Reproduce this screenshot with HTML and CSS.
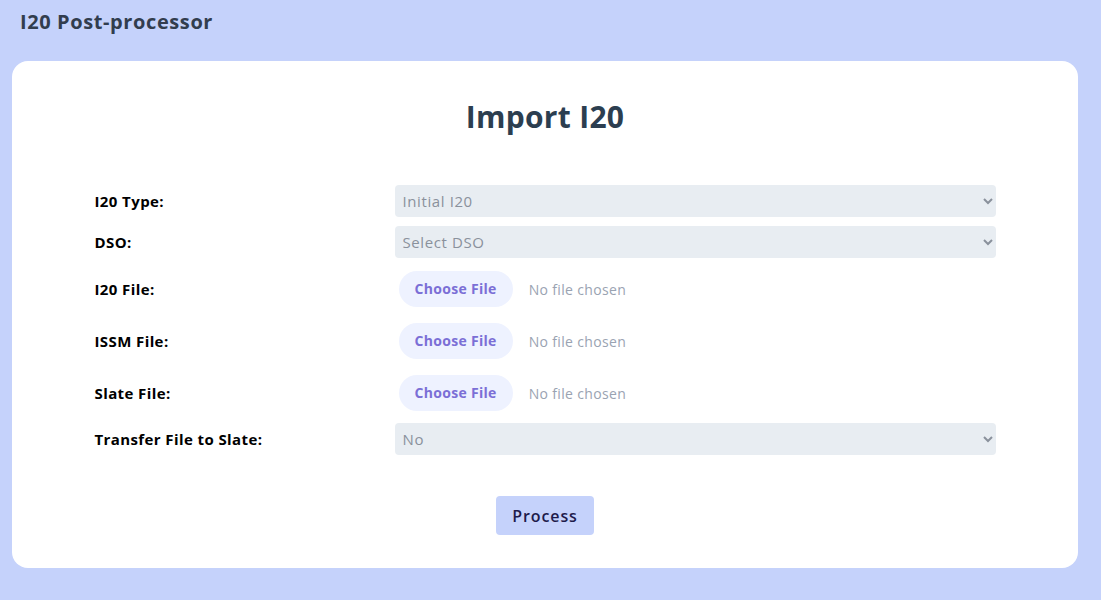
FILE: index.html
```html
<!DOCTYPE html>
<html lang="en">
<head>
<meta charset="utf-8">
<title>I20 Post-processor</title>
<link rel="stylesheet" href="styles.css">
</head>
<body>
<header class="topbar">I20 Post-processor</header>
<main class="page">
  <section class="card">
    <h1 class="title">Import I20</h1>
    <form class="form">
      <label class="label" for="type">I20 Type:</label>
      <select class="select" id="type"><option>Initial I20</option></select>

      <label class="label" for="dso">DSO:</label>
      <select class="select" id="dso"><option>Select DSO</option></select>

      <label class="label" for="i20file">I20 File:</label>
      <div class="file-cell"><input class="file" type="file" id="i20file"></div>

      <label class="label" for="issm">ISSM File:</label>
      <div class="file-cell"><input class="file" type="file" id="issm"></div>

      <label class="label" for="slate">Slate File:</label>
      <div class="file-cell"><input class="file" type="file" id="slate"></div>

      <label class="label" for="transfer">Transfer File to Slate:</label>
      <select class="select" id="transfer"><option>No</option></select>
    </form>
    <div class="actions">
      <button class="process" type="button">Process</button>
    </div>
  </section>
</main>
</body>
</html>
```

FILE: styles.css
```css
* { box-sizing: border-box; }

html, body {
  margin: 0;
  background: #c5d2fb;
  font-family: "Open Sans", "Liberation Sans", sans-serif;
}

.topbar {
  height: 44px;
  padding: 8px 20px;
  font-size: 20px;
  line-height: 28px;
  font-weight: 700;
  letter-spacing: 0.6px;
  color: #323d4e;
}

.page {
  padding: 17px 23px 32px 12px;
}

.card {
  background: #ffffff;
  border-radius: 16px;
  height: 507px;
  padding: 32px 0 0;
}

.title {
  margin: 0;
  height: 48px;
  font-size: 30px;
  line-height: 48px;
  font-weight: 700;
  letter-spacing: 0.3px;
  text-align: center;
  color: #2c3e50;
}

.form {
  width: 901px;
  margin: 44px auto 0;
  display: grid;
  grid-template-columns: 300px 601px;
  row-gap: 9px;
  align-items: center;
}

.label {
  font-size: 15px;
  font-weight: 700;
  letter-spacing: 0.4px;
  color: #000000;
}

.select {
  height: 32px;
  width: 100%;
  border: none;
  border-radius: 4px;
  background-color: #e8edf2;
  color: #8a919c;
  font-family: inherit;
  font-size: 15px;
  letter-spacing: 0.6px;
  padding: 0 4px;
}

.file-cell {
  height: 43px;
  display: flex;
  align-items: center;
  padding-left: 4px;
}

.file {
  font-family: inherit;
  font-size: 14px;
  letter-spacing: 0.35px;
  color: #9aa3b2;
}

.file::file-selector-button {
  height: 36px;
  padding: 0 16px;
  margin-right: 16px;
  border: none;
  border-radius: 18px;
  background: #eef2ff;
  color: #7b6fd6;
  font-family: inherit;
  font-size: 14px;
  font-weight: 700;
  letter-spacing: 0.3px;
}

.actions {
  display: flex;
  justify-content: center;
  margin-top: 41px;
}

.process {
  height: 39px;
  width: 98px;
  border: none;
  border-radius: 4px;
  background: #c5d2fb;
  color: #1e1b4b;
  font-family: inherit;
  font-size: 16px;
  font-weight: 600;
  letter-spacing: 0.9px;
}
```
